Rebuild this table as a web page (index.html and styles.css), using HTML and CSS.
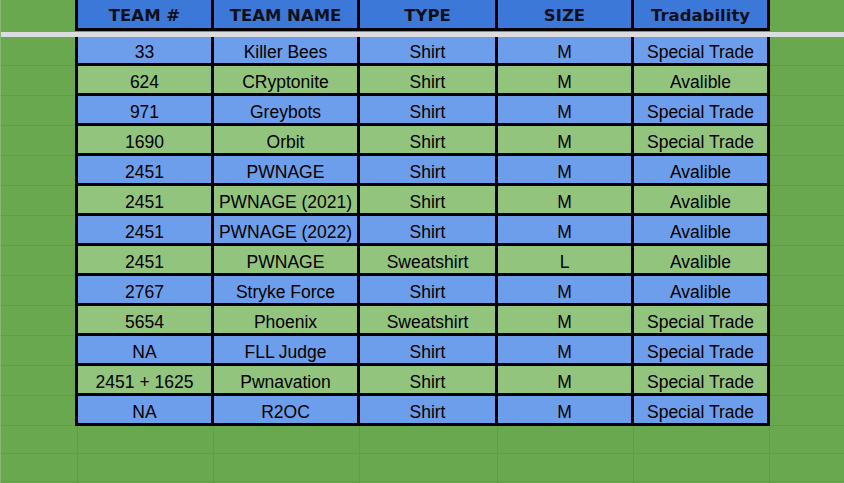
FILE: index.html
```html
<!DOCTYPE html>
<html>
<head>
<meta charset="utf-8">
<link rel="stylesheet" href="styles.css">
</head>
<body>
<div class="sheet">
  <div class="line head">
    <div class="gut"></div>
    <div class="trow">
      <div class="cell">TEAM #</div>
      <div class="cell">TEAM NAME</div>
      <div class="cell">TYPE</div>
      <div class="cell">SIZE</div>
      <div class="cell">Tradability</div>
    </div>
    <div class="fill"></div>
  </div>
  <div class="freeze"></div>

  <div class="line first blue">
    <div class="gut"></div>
    <div class="trow"><div class="cell">33</div><div class="cell">Killer Bees</div><div class="cell">Shirt</div><div class="cell">M</div><div class="cell">Special Trade</div></div>
    <div class="fill"></div>
  </div>
  <div class="line green">
    <div class="gut"></div>
    <div class="trow"><div class="cell">624</div><div class="cell">CRyptonite</div><div class="cell">Shirt</div><div class="cell">M</div><div class="cell">Avalible</div></div>
    <div class="fill"></div>
  </div>
  <div class="line blue">
    <div class="gut"></div>
    <div class="trow"><div class="cell">971</div><div class="cell">Greybots</div><div class="cell">Shirt</div><div class="cell">M</div><div class="cell">Special Trade</div></div>
    <div class="fill"></div>
  </div>
  <div class="line green">
    <div class="gut"></div>
    <div class="trow"><div class="cell">1690</div><div class="cell">Orbit</div><div class="cell">Shirt</div><div class="cell">M</div><div class="cell">Special Trade</div></div>
    <div class="fill"></div>
  </div>
  <div class="line blue">
    <div class="gut"></div>
    <div class="trow"><div class="cell">2451</div><div class="cell">PWNAGE</div><div class="cell">Shirt</div><div class="cell">M</div><div class="cell">Avalible</div></div>
    <div class="fill"></div>
  </div>
  <div class="line green">
    <div class="gut"></div>
    <div class="trow"><div class="cell">2451</div><div class="cell">PWNAGE (2021)</div><div class="cell">Shirt</div><div class="cell">M</div><div class="cell">Avalible</div></div>
    <div class="fill"></div>
  </div>
  <div class="line blue">
    <div class="gut"></div>
    <div class="trow"><div class="cell">2451</div><div class="cell">PWNAGE (2022)</div><div class="cell">Shirt</div><div class="cell">M</div><div class="cell">Avalible</div></div>
    <div class="fill"></div>
  </div>
  <div class="line green">
    <div class="gut"></div>
    <div class="trow"><div class="cell">2451</div><div class="cell">PWNAGE</div><div class="cell">Sweatshirt</div><div class="cell">L</div><div class="cell">Avalible</div></div>
    <div class="fill"></div>
  </div>
  <div class="line blue">
    <div class="gut"></div>
    <div class="trow"><div class="cell">2767</div><div class="cell">Stryke Force</div><div class="cell">Shirt</div><div class="cell">M</div><div class="cell">Avalible</div></div>
    <div class="fill"></div>
  </div>
  <div class="line green">
    <div class="gut"></div>
    <div class="trow"><div class="cell">5654</div><div class="cell">Phoenix</div><div class="cell">Sweatshirt</div><div class="cell">M</div><div class="cell">Special Trade</div></div>
    <div class="fill"></div>
  </div>
  <div class="line blue">
    <div class="gut"></div>
    <div class="trow"><div class="cell">NA</div><div class="cell">FLL Judge</div><div class="cell">Shirt</div><div class="cell">M</div><div class="cell">Special Trade</div></div>
    <div class="fill"></div>
  </div>
  <div class="line green">
    <div class="gut"></div>
    <div class="trow"><div class="cell">2451 + 1625</div><div class="cell">Pwnavation</div><div class="cell">Shirt</div><div class="cell">M</div><div class="cell">Special Trade</div></div>
    <div class="fill"></div>
  </div>
  <div class="line blue">
    <div class="gut"></div>
    <div class="trow"><div class="cell">NA</div><div class="cell">R2OC</div><div class="cell">Shirt</div><div class="cell">M</div><div class="cell">Special Trade</div></div>
    <div class="fill"></div>
  </div>

  <div class="empty"><div></div><div></div><div></div><div></div><div></div><div></div><div></div></div>
  <div class="empty"><div></div><div></div><div></div><div></div><div></div><div></div><div></div></div>
  <div class="empty"><div></div><div></div><div></div><div></div><div></div><div></div><div></div></div>
</div>
</body>
</html>
```

FILE: styles.css
```css
html, body {
  margin: 0;
  padding: 0;
  background: #6aa84f;
  overflow: hidden;
}

.sheet {
  display: flex;
  flex-direction: column;
  width: 844px;
  height: 483px;
  overflow: hidden;
  background: #6aa84f;
  border-left: 1px solid #85b86e;
  box-sizing: border-box;
}

.line {
  display: flex;
  flex: none;
}

.gut {
  width: 74px;
  flex: none;
  box-sizing: border-box;
  border-bottom: 1px solid #609d46;
}

.fill {
  flex: 1;
  box-sizing: border-box;
  border-bottom: 1px solid #609d46;
}

.trow {
  display: grid;
  grid-template-columns: 133px 143px 135px 133px 133px;
  column-gap: 3px;
  padding: 0 3px 3px;
  background: #000;
  width: 695px;
  box-sizing: border-box;
  flex: none;
}

.cell {
  height: 27px;
  display: flex;
  align-items: flex-end;
  justify-content: center;
  padding-bottom: 1px;
  box-sizing: border-box;
  font-family: "Liberation Sans", Arial, sans-serif;
  font-size: 17.5px;
  line-height: 20px;
  color: #000;
  white-space: nowrap;
  overflow: hidden;
}

.head .gut,
.head .fill {
  border-bottom: none;
}

.head .cell {
  height: 28px;
  background: #3c78d8;
  align-items: center;
  padding: 4px 0 0;
  font-family: "DejaVu Sans", sans-serif;
  font-weight: bold;
  font-size: 16.5px;
  color: #0d0f1a;
}

.freeze {
  flex: none;
  height: 5px;
  margin-top: 1px;
  background: #dadce0;
}

.first .cell {
  height: 26px;
}

.blue .cell {
  background: #6d9eeb;
}

.green .cell {
  background: #93c47d;
}

.empty {
  display: grid;
  grid-template-columns: 77px 136px 146px 138px 136px 136px 1fr;
  height: 28px;
  flex: none;
}

.empty > div {
  box-sizing: border-box;
  border-right: 1px solid #609d46;
  border-bottom: 1px solid #609d46;
}

.empty > div:last-child {
  border-right: none;
}
```
